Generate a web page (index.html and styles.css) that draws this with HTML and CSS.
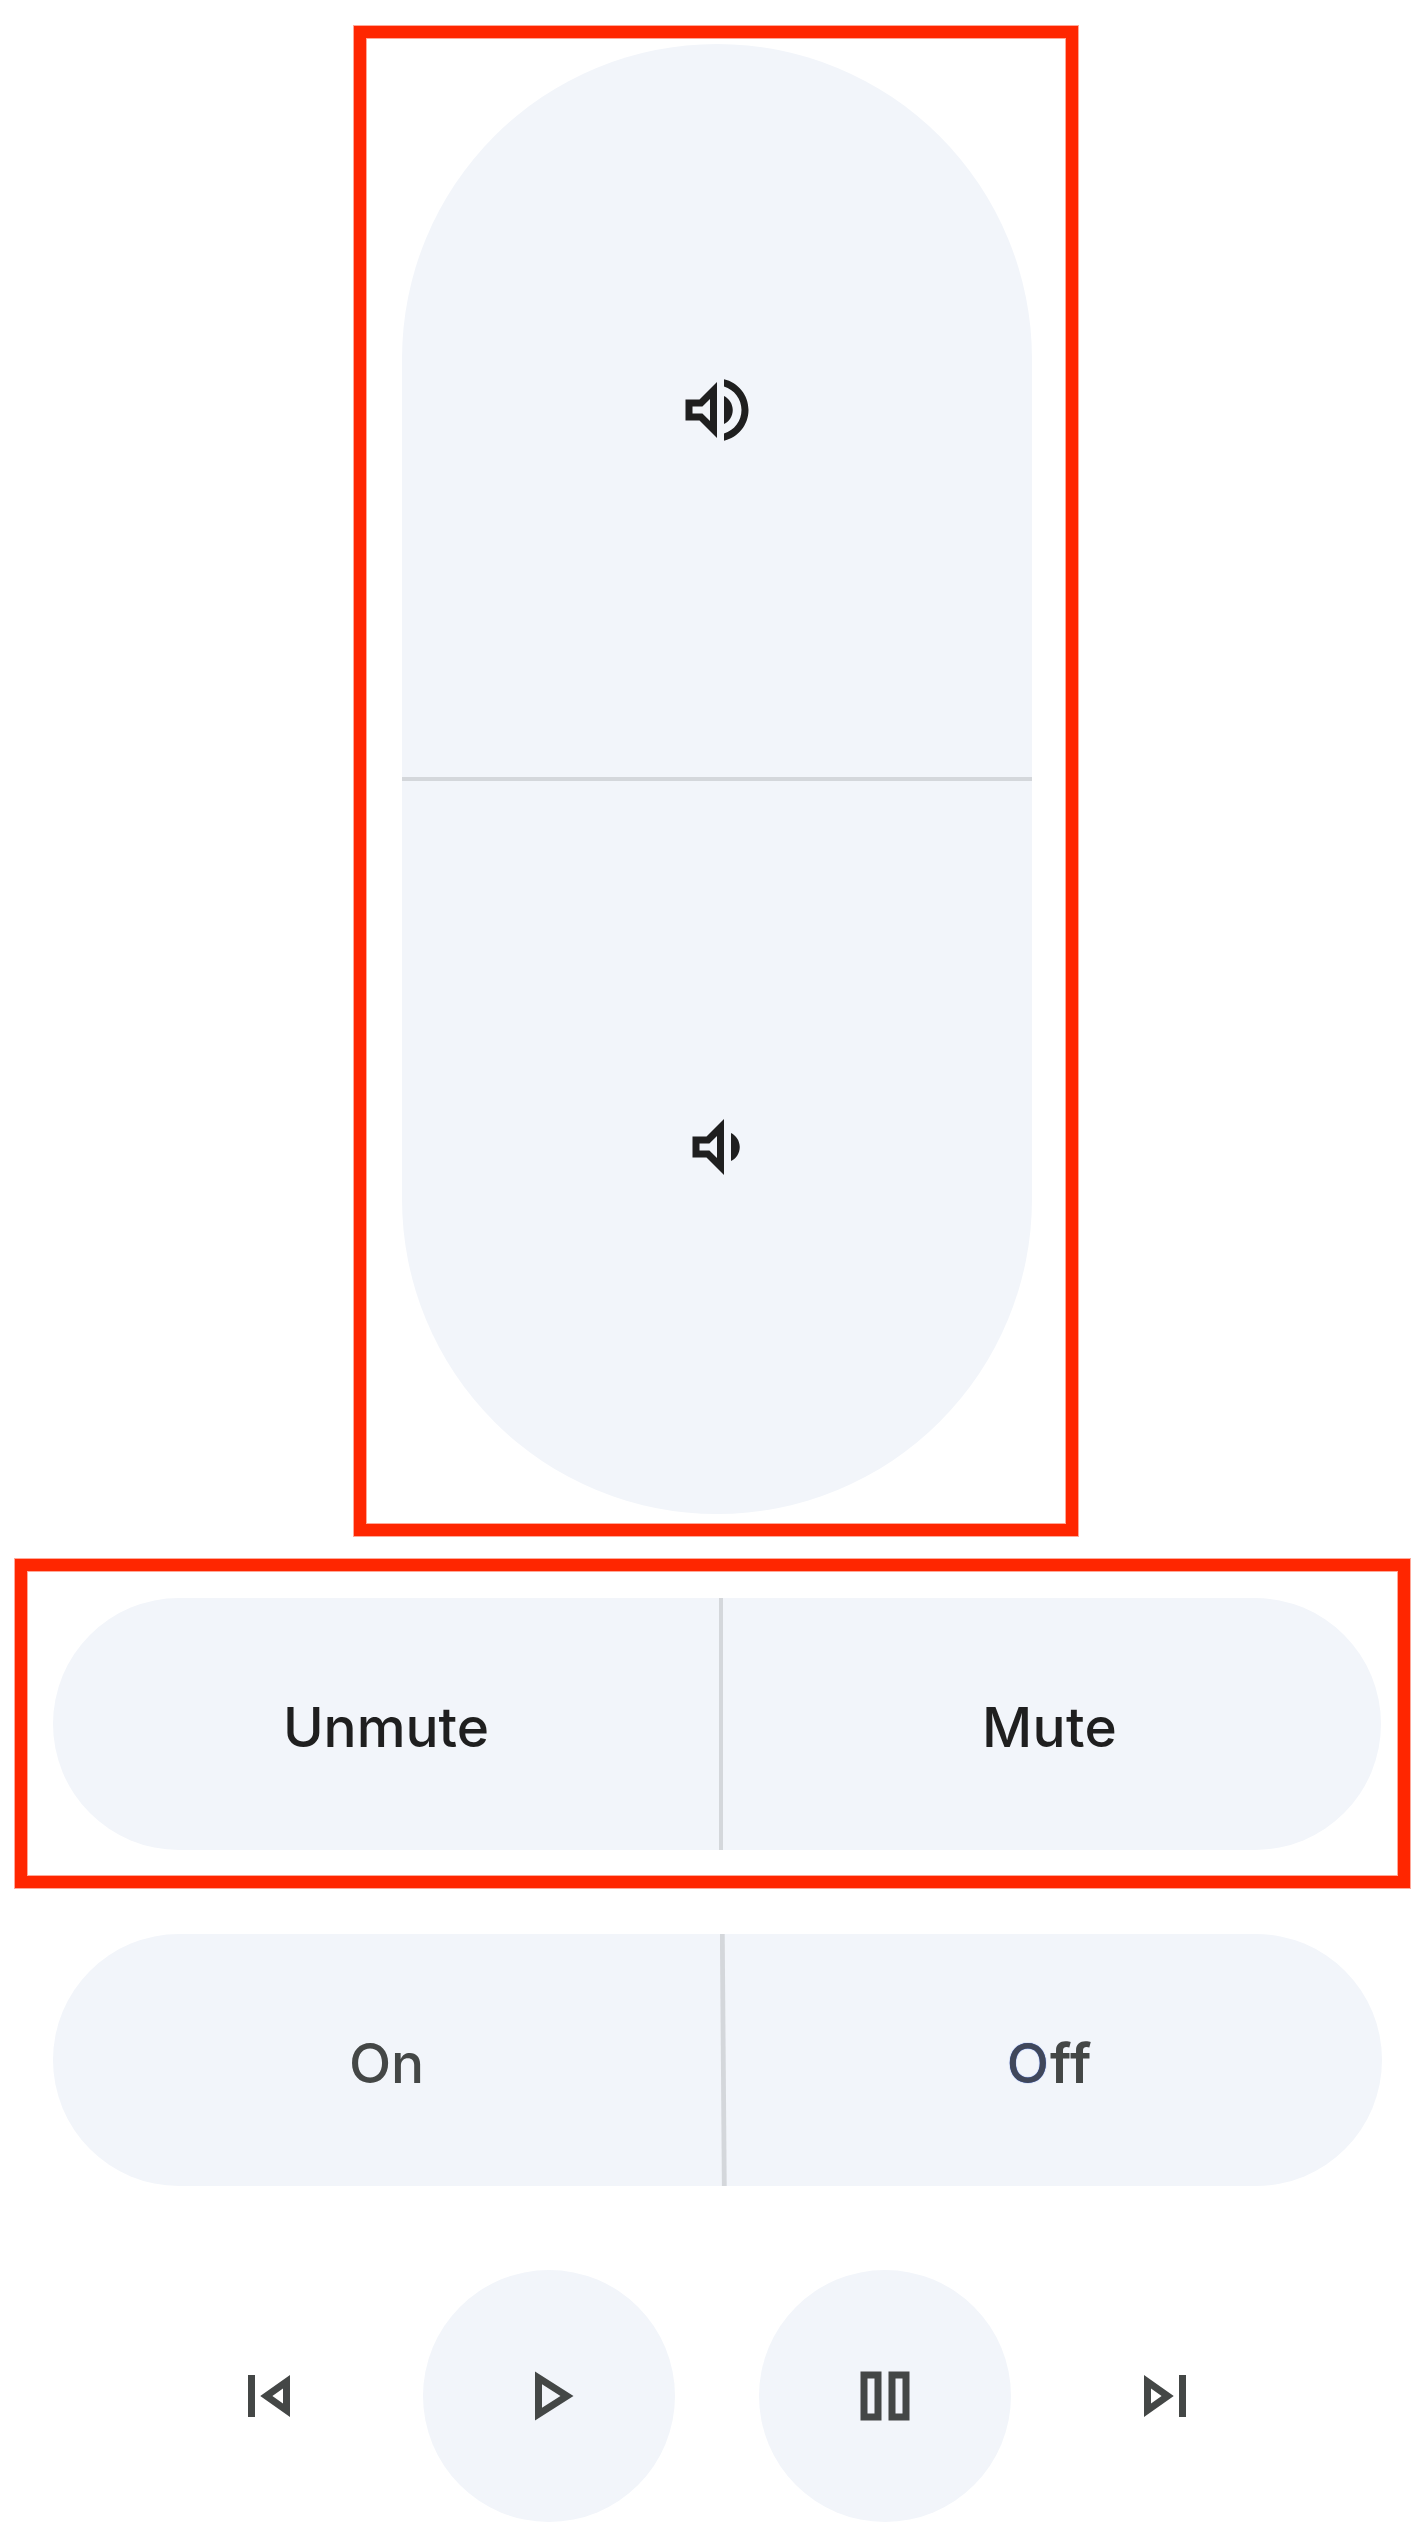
FILE: index.html
```html
<!DOCTYPE html>
<html lang="en">
<head>
<meta charset="utf-8">
<title>Media controls</title>
<link rel="stylesheet" href="styles.css">
</head>
<body>
<main class="controls">
  <section class="highlight highlight-volume">
    <div class="volume">
      <button class="volume-button" aria-label="Volume up">
        <svg class="icon" viewBox="0 0 24 24"><path d="M3 9v6h4l5 5V4L7 9H3zm7-.17v6.34L7.83 13H5v-2h2.83L10 8.83zM16.5 12c0-1.77-1.02-3.29-2.5-4.03v8.05c1.48-.73 2.5-2.25 2.5-4.02zM14 3.23v2.06c2.89.86 5 3.54 5 6.71s-2.11 5.85-5 6.71v2.06c4.01-.91 7-4.49 7-8.77s-2.99-7.86-7-8.77z"/></svg>
      </button>
      <div class="divider-h"></div>
      <button class="volume-button" aria-label="Volume down">
        <svg class="icon" viewBox="0 0 24 24"><path d="M16 7.97v8.05c1.48-.73 2.5-2.25 2.5-4.02 0-1.77-1.02-3.29-2.5-4.03zM5 9v6h4l5 5V4L9 9H5zm7-.17v6.34L9.83 13H7v-2h2.83L12 8.83z"/></svg>
      </button>
    </div>
  </section>

  <section class="highlight highlight-mute">
    <div class="pair">
      <button class="pair-button"><span class="label">Unmute</span></button>
      <div class="divider-v"></div>
      <button class="pair-button"><span class="label mute">Mute</span></button>
    </div>
  </section>

  <section class="pair power">
    <button class="pair-button"><span class="label">On</span></button>
    <svg class="divider-slant" viewBox="0 0 7 252"><path d="M2.3 0L4.3 252"/></svg>
    <button class="pair-button"><span class="label off"><span class="initial">O</span>ff</span></button>
  </section>

  <section class="transport">
    <button class="skip" aria-label="Previous">
      <svg class="icon" viewBox="0 0 24 24"><path d="M6 6h2v12H6zm3.5 6l8.5 6V6l-8.5 6zm6.5 2.14L12.97 12 16 9.86v4.28z"/></svg>
    </button>
    <div class="play-group">
      <button class="round" aria-label="Play">
        <svg class="icon" viewBox="0 0 24 24"><path d="M10 8.64L15.27 12 10 15.36V8.64M8 5v14l11-7L8 5z"/></svg>
      </button>
      <button class="round" aria-label="Pause">
        <svg class="icon" viewBox="0 0 24 24"><path fill-rule="evenodd" d="M5 5h6v14H5zM7 7v10h2V7zM13 5h6v14h-6zM15 7v10h2V7z"/></svg>
      </button>
    </div>
    <button class="skip" aria-label="Next">
      <svg class="icon" viewBox="0 0 24 24"><path d="M6 18l8.5-6L6 6v12zm2-8.14L11.03 12 8 14.14V9.86zM16 6h2v12h-2z"/></svg>
    </button>
  </section>
</main>
</body>
</html>
```
FILE: styles.css
```css
* { box-sizing: border-box; }

body {
  margin: 0;
  background: #fff;
  font-family: Inter, "Liberation Sans", sans-serif;
}

button {
  margin: 0;
  padding: 0;
  border: 0;
  background: none;
  color: inherit;
  font: inherit;
}

.controls {
  display: flex;
  flex-direction: column;
  width: 1417px;
  height: 2527px;
  padding-top: 26px;
  overflow: hidden;
  color: #1f1f1f;
}

.highlight {
  border: 12px solid #ff2600;
  box-shadow: 0 0 0 1px rgba(255, 38, 0, .4), inset 0 0 0 1px rgba(255, 38, 0, .4);
}

.highlight-volume {
  width: 724px;
  height: 1510px;
  margin-left: 354px;
  padding: 6px 0 0 36px;
}

.volume {
  display: flex;
  flex-direction: column;
  width: 630px;
  height: 1470px;
  border-radius: 315px;
  background: #f2f5fa;
}

.volume-button {
  display: flex;
  flex: 1;
  align-items: center;
  justify-content: center;
  padding: 0 1px 2px 0;
}

.divider-h {
  height: 4px;
  background: #d4d7db;
}

.icon {
  display: block;
  width: 84px;
  height: 84px;
  fill: currentColor;
}

.highlight-mute {
  width: 1395px;
  height: 329px;
  margin: 23px 0 0 15px;
  padding: 27px 0 0 26px;
}

.pair {
  display: grid;
  grid-template-columns: 666px 4px 1fr;
  width: 1328px;
  height: 252px;
  border-radius: 126px;
  background: #f2f5fa;
}

.pair-button {
  display: flex;
  align-items: center;
  justify-content: center;
}

.divider-v { background: #d4d7db; }

.label {
  padding-top: 6px;
  font-size: 55px;
  font-weight: 500;
  line-height: 66px;
}

.power {
  grid-template-columns: 667px 7px 1fr;
  width: 1329px;
  margin: 46px 0 0 53px;
  color: #444746;
}

.divider-slant {
  width: 7px;
  height: 252px;
  fill: none;
  stroke: #d4d7db;
  stroke-width: 4.8;
}

.mute {
  padding-right: 5px;
  letter-spacing: .3px;
}

.off {
  padding-right: 10px;
  font-weight: 600;
  letter-spacing: .9px;
}

.initial {
  color: #40475a;
  font-weight: 500;
  text-shadow: 0 0 1px #2a5be0;
}

.transport {
  display: flex;
  gap: 112px;
  align-items: center;
  margin: 84px 0 0 227px;
  color: #444746;
}

.play-group {
  display: flex;
  gap: 84px;
}

.round {
  display: flex;
  align-items: center;
  justify-content: center;
  width: 252px;
  height: 252px;
  border-radius: 50%;
  background: #f2f5fa;
}
```
